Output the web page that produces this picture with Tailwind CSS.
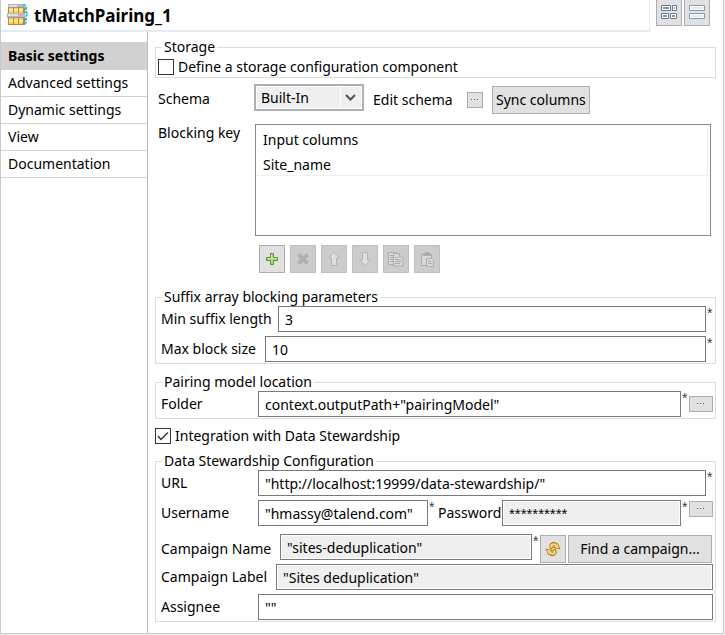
<!DOCTYPE html>
<html lang="en">
<head>
  <meta charset="UTF-8" />
  <meta name="viewport" content="width=device-width, initial-scale=1.0" />
  <title>tMatchPairing_1</title>
  <script src="https://cdn.jsdelivr.net/npm/@tailwindcss/browser@4"></script>
</head>
<body class="bg-[#f0f0f0] pr-px font-['Noto_Sans',sans-serif] text-sm leading-5 text-black">
  <div class="bg-white border-x border-b border-[#c8c8c8]">
    <!-- Title bar -->
    <header class="flex h-8 items-start">
      <div class="flex h-8 flex-1 items-center border-r border-b-2 border-r-[#ececec] border-b-[#e0ebf4] pl-[5px]">
        <svg class="mr-1 h-6 w-6" viewBox="0 0 24 24" aria-hidden="true">
          <path fill="#c08a2c" d="M2 4h17v6H2zM2 14h17v8H2z" />
          <path fill="#fbd068" d="M3 5h4v5H3zM8 5h4v5H8zM13 5h4v5h-4zM3 15h4v6H3zM8 15h4v6H8zM13 15h4v6h-4z" />
          <path fill="#fde6a4" d="M3 6h4v2H3zM8 6h4v2H8zM13 6h4v2h-4zM3 17h4v2H3zM8 17h4v2H8zM13 17h4v2h-4z" />
          <path fill="#b8b8b8" d="M2 1h17v4H2zM1 10h18v5H1z" />
          <path fill="#dedede" d="M3 2h8v2H3zM2 11h10v2H2z" />
          <path stroke="#979797" d="M2 4.500h16M1 14.500h18" />
          <path fill="none" stroke="#35b8ea" stroke-width="2" stroke-dasharray="3 1" d="M17 2h1q2 0 2 3v3q0 2 2 3q-2 1-2 3v4q0 3-2 3h-2" />
        </svg>
        <h1 class="pt-0.5 text-[17px] font-bold">tMatchPairing_1</h1>
      </div>
      <div class="ml-1.5 mr-[13px] flex gap-0.5">
        <button type="button" aria-label="Grid layout" class="flex h-[26px] w-[26px] items-center justify-center border border-t-0 border-[#adadad] bg-[#e1e1e1]">
          <svg class="h-4 w-4" viewBox="0 0 16 16" fill="#fff" stroke="#5f7896">
            <path d="M.5 .5h9v5h-9zM11.500 .5h4v5h-4zM.5 8.500h7v5h-7zM9.500 8.500h6v5h-6z" />
            <path fill="#8f8f9f" stroke="none" d="M2 2h6v2H2zM13 2h1v2h-1zM2 10h4v2H2zM11 10h3v2h-3z" />
          </svg>
        </button>
        <button type="button" aria-label="List layout" class="flex h-[26px] w-[26px] items-center justify-center border border-t-0 border-[#adadad] bg-[#e1e1e1]">
          <svg class="h-4 w-4" viewBox="0 0 16 16" fill="#fff" stroke="#7c9abf">
            <path d="M.5 .5h15v5H.5zM.5 8.500h15v5H.5z" />
            <path fill="#ece9d8" stroke="none" d="M2 2h12v2H2zM2 10h12v2H2z" />
          </svg>
        </button>
      </div>
    </header>

    <div class="flex">
      <!-- Tabs -->
      <nav class="w-[147px] shrink-0 border-r border-[#bdbdbd] pt-2.5">
        <a href="#basic" class="block h-7 bg-[#d1d1d1] pl-[7px] leading-7 font-bold">Basic settings</a>
        <a href="#advanced" class="block h-[27px] border-b border-[#d1d1d1] pl-[7px] leading-[26px]">Advanced settings</a>
        <a href="#dynamic" class="block h-[27px] border-b border-[#d1d1d1] pl-[7px] leading-[26px]">Dynamic settings</a>
        <a href="#view" class="block h-[27px] border-b border-[#d1d1d1] pl-[7px] leading-[26px]">View</a>
        <a href="#documentation" class="block h-[27px] border-b border-[#d1d1d1] pl-[7px] leading-[26px]">Documentation</a>
      </nav>

      <main class="min-w-0 flex-1 px-[7px] pt-1.5 pb-[11px]">
        <fieldset class="min-w-0 border border-[#dcdcdc]">
          <legend class="ml-1.5 h-[18px] px-0.5 leading-[18px]">Storage</legend>
          <div class="flex h-[21px] items-center pl-0.5">
            <input id="storage" type="checkbox" class="mr-1 h-4 w-4 appearance-none border border-[#333] bg-white" />
            <label for="storage">Define a storage configuration component</label>
          </div>
        </fieldset>

        <div class="mt-1.5 flex h-[30px] items-center pl-[3px]">
          <label for="schema" class="w-24 shrink-0">Schema</label>
          <div class="grid w-[110px] shrink-0 items-center self-start">
            <select id="schema" class="col-start-1 row-start-1 h-[27px] w-full appearance-none border-2 border-[#abb0b8] bg-[#efefef] pl-[5px] shadow-[inset_0_0_0_1px_#fff]">
              <option>Built-In</option>
            </select>
            <svg class="pointer-events-none col-start-1 row-start-1 mr-0.5 h-[21px] w-[22px] justify-self-end" viewBox="0 0 22 21" fill="none" aria-hidden="true">
              <path stroke="#fff" d="M.5 0v21" />
              <path stroke="#555" stroke-width="2" d="M6 8l4.500 4.500L15 8" />
            </svg>
          </div>
          <span class="ml-[9px] w-[94px] pt-0.5">Edit schema</span>
          <button type="button" aria-label="Edit schema" class="mt-0.5 flex h-4 w-4 items-center justify-center border border-[#adadad] bg-[#e1e1e1]">
            <svg class="h-1 w-2" viewBox="0 0 8 4" fill="#4a5f8c"><path d="M0 1h1v1H0zM3 1h1v1H3zM6 1h1v1H6z" /></svg>
          </button>
          <button type="button" class="ml-[9px] h-7 self-end border border-[#adadad] bg-[#e1e1e1] px-[3px] whitespace-nowrap">Sync columns</button>
        </div>

        <div class="mt-2.5 flex pr-[5px] pl-[3px]">
          <div class="w-[97px] shrink-0 pr-1 leading-[18px]">Blocking key</div>
          <div class="min-w-0 flex-1">
            <div class="h-28 border border-[#828790] pr-0.5">
              <table class="w-full border-r border-b border-[#f0f0f0]">
                <thead>
                  <tr><th class="h-[26px] p-0 pt-1 pl-[7px] text-left font-normal">Input columns</th></tr>
                </thead>
                <tbody>
                  <tr><td class="h-6 p-0 pt-1 pl-[7px]">Site_name</td></tr>
                </tbody>
              </table>
            </div>
            <div class="mt-[9px] ml-1 flex gap-[5px]">
              <button type="button" aria-label="Add" class="flex h-7 w-[26px] items-center justify-center border border-[#adadad] bg-[#e1e1e1]">
                <svg class="h-4 w-4" viewBox="0 0 16 16">
                  <path fill="#b9d94e" stroke="#3f9a5c" d="M6.500 2.500h3v4h4v3h-4v4h-3v-4h-4v-3h4z" />
                  <path fill="none" stroke="#e3ea7a" d="M4 7.500h8M7.500 4v4" />
                </svg>
              </button>
              <button type="button" disabled aria-label="Remove" class="flex h-7 w-[26px] items-center justify-center border border-[#bfbfbf] bg-[#ccc]">
                <svg class="h-4 w-4" viewBox="0 0 16 16" fill="none">
                  <path stroke="#c0c0c0" stroke-width="5" d="M3.500 3.500l9 9M12.500 3.500l-9 9" />
                  <path stroke="#aeaeae" stroke-width="3" d="M3.500 3.500l9 9M12.500 3.500l-9 9" />
                </svg>
              </button>
              <button type="button" disabled aria-label="Move up" class="flex h-7 w-[26px] items-center justify-center border border-[#bfbfbf] bg-[#ccc]">
                <svg class="h-4 w-4" viewBox="0 0 16 16" fill="#dedede" stroke="#b2b2b2">
                  <path d="M8 1.500l5.500 5.500H10.500v7.500h-5V7H2.500z" />
                </svg>
              </button>
              <button type="button" disabled aria-label="Move down" class="flex h-7 w-[26px] items-center justify-center border border-[#bfbfbf] bg-[#ccc]">
                <svg class="h-4 w-4" viewBox="0 0 16 16" fill="#dedede" stroke="#b2b2b2">
                  <path d="M8 14.500l5.500-5.500H10.500V1.500h-5V9H2.500z" />
                </svg>
              </button>
              <button type="button" disabled aria-label="Copy" class="flex h-7 w-[26px] items-center justify-center border border-[#bfbfbf] bg-[#ccc]">
                <svg class="h-4 w-4" viewBox="0 0 16 16" fill="#d8d8d8" stroke="#adadad">
                  <path d="M.5 1.500h8v12h-8z" />
                  <path d="M2 4.500h3M2 6.500h3M2 8.500h3M2 10.500h3" />
                  <path d="M5.500 2.500h6l3.500 3.500v9H5.500z" />
                  <path d="M11.500 2.500V6H15M7 6.500h3M7 8.500h6M7 10.500h6M7 12.500h5" />
                </svg>
              </button>
              <button type="button" disabled aria-label="Paste" class="flex h-7 w-[26px] items-center justify-center border border-[#bfbfbf] bg-[#ccc]">
                <svg class="h-4 w-4" viewBox="0 0 16 16" fill="#d8d8d8" stroke="#adadad">
                  <path d="M2.500 3.500h10v11h-10z" />
                  <path fill="#aaa" d="M4.500 4.500v-2h2v-1h3v1h2v2z" />
                  <path d="M7.500 7.500h5l2 2v6h-7z" />
                  <path d="M9 10.500h3M9 12.500h4" />
                </svg>
              </button>
            </div>
          </div>
        </div>

        <fieldset class="mt-[15px] min-w-0 border border-[#dcdcdc] pr-0.5 pb-px pl-[5px]">
          <legend class="ml-px h-[18px] px-0.5 leading-[18px]">Suffix array blocking parameters</legend>
          <div class="flex flex-col gap-1">
            <div class="flex items-center">
              <label for="minSuffix" class="w-[117px] shrink-0">Min suffix length</label>
              <input id="minSuffix" type="text" value="3" class="h-[26px] min-w-0 flex-1 border border-[#7a7a7a] px-1.5" />
              <span class="w-[7px] self-start pl-px font-['Liberation_Sans',sans-serif] leading-[14px] text-[#1f3c5c]">*</span>
            </div>
            <div class="flex items-center">
              <label for="maxBlock" class="w-[104px] shrink-0">Max block size</label>
              <input id="maxBlock" type="text" value="10" class="h-[26px] min-w-0 flex-1 border border-[#7a7a7a] px-1.5" />
              <span class="w-[7px] self-start pl-px font-['Liberation_Sans',sans-serif] leading-[14px] text-[#1f3c5c]">*</span>
            </div>
          </div>
        </fieldset>

        <fieldset class="mt-[9px] min-w-0 border border-[#dcdcdc] pr-0.5 pb-px pl-[5px]">
          <legend class="ml-px h-[18px] px-0.5 leading-[18px]">Pairing model location</legend>
          <div class="flex items-center">
            <label for="folder" class="w-[97px] shrink-0">Folder</label>
            <input id="folder" type="text" value='context.outputPath+"pairingModel"' class="h-[26px] min-w-0 flex-1 border border-[#7a7a7a] px-1.5" />
            <span class="w-[7px] self-start pl-px font-['Liberation_Sans',sans-serif] leading-[14px] text-[#1f3c5c]">*</span>
            <button type="button" aria-label="Browse folder" class="ml-px flex h-4 w-6 items-center justify-center border border-[#adadad] bg-[#e1e1e1]">
              <svg class="h-1 w-2" viewBox="0 0 8 4" fill="#4a5f8c"><path d="M0 1h1v1H0zM3 1h1v1H3zM6 1h1v1H6z" /></svg>
            </button>
          </div>
        </fieldset>

        <div class="mt-[7px] flex h-5 items-center">
          <div class="mr-1 grid h-4 w-4">
            <input id="stewardship" type="checkbox" checked class="peer col-start-1 row-start-1 h-4 w-4 appearance-none border border-[#333] bg-white" />
            <svg class="pointer-events-none invisible col-start-1 row-start-1 h-4 w-4 peer-checked:visible" viewBox="0 0 16 16" fill="none" aria-hidden="true">
              <path stroke="#333" stroke-width="1.500" d="M3 8l3 3.500L13 4.500" />
            </svg>
          </div>
          <label for="stewardship">Integration with Data Stewardship</label>
        </div>

        <fieldset class="mt-1.5 min-w-0 border border-[#dcdcdc] pr-0.5 pb-px pl-[5px]">
          <legend class="ml-px h-[18px] px-0.5 leading-[18px]">Data Stewardship Configuration</legend>
          <div class="flex items-center">
            <label for="url" class="w-[97px] shrink-0">URL</label>
            <input id="url" type="text" value='"http://localhost:19999/data-stewardship/"' class="h-[26px] min-w-0 flex-1 border border-[#7a7a7a] px-1.5" />
            <span class="w-[7px] self-start pl-px font-['Liberation_Sans',sans-serif] leading-[14px] text-[#1f3c5c]">*</span>
          </div>
          <div class="mt-1 flex items-center">
            <label for="username" class="w-[97px] shrink-0">Username</label>
            <input id="username" type="text" value='"hmassy@talend.com"' class="h-[26px] w-[170px] border border-[#7a7a7a] px-1.5" />
            <span class="w-[7px] self-start pl-px font-['Liberation_Sans',sans-serif] leading-[14px] text-[#1f3c5c]">*</span>
            <label for="password" class="ml-[3px] w-16 shrink-0">Password</label>
            <input id="password" type="text" readonly value="**********" class="h-[26px] min-w-0 flex-1 border border-[#7a7a7a] bg-[#efefef] px-1.5 font-['Liberation_Sans',sans-serif] text-[15px] shadow-[inset_0_0_0_1px_#fff]" />
            <span class="w-[7px] self-start pl-px font-['Liberation_Sans',sans-serif] leading-[14px] text-[#1f3c5c]">*</span>
            <button type="button" aria-label="Edit password" class="mt-px ml-px flex h-4 w-6 items-center justify-center self-start border border-[#adadad] bg-[#e1e1e1]">
              <svg class="h-1 w-2" viewBox="0 0 8 4" fill="#4a5f8c"><path d="M0 1h1v1H0zM3 1h1v1H3zM6 1h1v1H6z" /></svg>
            </button>
          </div>
          <div class="mt-2 flex items-center">
            <label for="campaignName" class="w-[119px] shrink-0">Campaign Name</label>
            <input id="campaignName" type="text" readonly value='"sites-deduplication"' class="h-[26px] min-w-0 flex-1 self-start border border-[#7a7a7a] bg-[#efefef] px-1.5 shadow-[inset_0_0_0_1px_#fff]" />
            <span class="w-[7px] self-start pl-px font-['Liberation_Sans',sans-serif] leading-[14px] text-[#1f3c5c]">*</span>
            <button type="button" aria-label="Refresh" class="mt-px ml-px flex h-7 w-[26px] shrink-0 items-center justify-center border border-[#adadad] bg-[#e1e1e1]">
              <svg class="h-4 w-4" viewBox="0 0 16 16" fill="none">
                <path stroke="#b8801c" stroke-width="4" d="M7.500 7.500C4.500 4 8 1.500 11 4" />
                <path fill="#fbe08a" stroke="#b8801c" d="M9 6.500l3.500-4 2.500 5.500z" />
                <path stroke="#fbe08a" stroke-width="2" d="M7 6.500C5 4 8 2 11.500 4.500" />
                <path stroke="#b8801c" stroke-width="4" d="M8.500 8.500C11.500 12 8 14.500 5 12" />
                <path fill="#fbe08a" stroke="#b8801c" d="M7 9.500l-3.500 4L1 8z" />
                <path stroke="#fbe08a" stroke-width="2" d="M9 9.500C11 12 8 14 4.500 11.500" />
              </svg>
            </button>
            <button type="button" class="mt-px mr-px ml-0.5 h-7 w-36 shrink-0 border border-[#adadad] bg-[#e1e1e1] whitespace-nowrap">Find a campaign...</button>
          </div>
          <div class="mt-px flex items-center">
            <label for="campaignLabel" class="w-[115px] shrink-0">Campaign Label</label>
            <input id="campaignLabel" type="text" readonly value='"Sites deduplication"' class="h-[26px] min-w-0 flex-1 border border-[#7a7a7a] bg-[#efefef] px-1.5 shadow-[inset_0_0_0_1px_#fff]" />
          </div>
          <div class="mt-1 flex items-center">
            <label for="assignee" class="w-[97px] shrink-0">Assignee</label>
            <input id="assignee" type="text" value='""' class="h-[26px] min-w-0 flex-1 border border-[#7a7a7a] px-1.5" />
          </div>
        </fieldset>
      </main>
    </div>
  </div>
</body>
</html>
